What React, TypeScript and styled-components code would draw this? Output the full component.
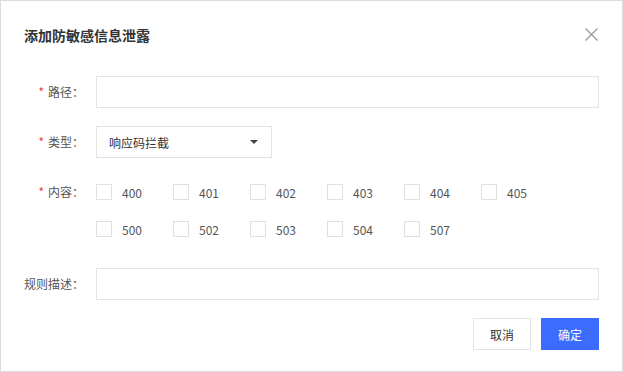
import React from "react";
import styled, { createGlobalStyle } from "styled-components";

const GlobalStyle = createGlobalStyle`
  html, body {
    margin: 0;
    padding: 0;
    background: #ffffff;
  }
  * {
    box-sizing: border-box;
  }
  body {
    font-family: "Noto Sans CJK SC", "Noto Sans", sans-serif;
    font-size: 12px;
    color: #333;
  }
`;

const Dialog = styled.div`
  width: 623px;
  height: 372px;
  border: 1px solid #dcdcdc;
  padding: 0 23px;
  background: #fff;
  display: flex;
  flex-direction: column;
`;

const Header = styled.div`
  display: flex;
  align-items: center;
  justify-content: space-between;
  padding-top: 23px;
  height: 44px;
`;

const Title = styled.h2`
  margin: 0;
  font-size: 14px;
  font-weight: 700;
  line-height: 20px;
  color: #333;
`;

const Close = styled.button`
  border: 0;
  background: none;
  padding: 0;
  width: 13px;
  height: 13px;
  display: flex;
  cursor: pointer;
  margin-right: 1px;
`;

const Form = styled.div`
  margin-top: 31px;
  display: flex;
  flex-direction: column;
  gap: 18px;
`;

const Row = styled.div<{ $top?: boolean }>`
  display: flex;
  align-items: ${(p) => (p.$top ? "flex-start" : "center")};
`;

const Label = styled.label`
  width: 72px;
  flex: none;
  padding-right: 12px;
  text-align: right;
  line-height: 32px;
  color: #555;
  white-space: nowrap;
`;

const Star = styled.span`
  color: #f04134;
  margin-right: 4px;
`;

const Input = styled.input`
  flex: 1;
  height: 32px;
  border: 1px solid #e3e3e3;
  outline: none;
  padding: 0 12px;
  font: inherit;
`;

const Select = styled.div`
  width: 176px;
  height: 32px;
  border: 1px solid #e3e3e3;
  display: flex;
  align-items: center;
  justify-content: space-between;
  padding: 0 12px 0 12px;
  color: #333;
`;

const Arrow = styled.span`
  width: 0;
  height: 0;
  border-left: 4px solid transparent;
  border-right: 4px solid transparent;
  border-top: 4px solid #444;
  margin-right: 1px;
`;

const Checks = styled.div`
  display: grid;
  grid-template-columns: repeat(6, 77px);
  row-gap: 5px;
  padding-bottom: 5px;
`;

const Check = styled.label`
  display: flex;
  align-items: center;
  gap: 10px;
  height: 32px;
  color: #555;
`;

const Box = styled.span`
  width: 16px;
  height: 16px;
  border: 1px solid #e0e0e0;
  background: #fff;
`;

const Footer = styled.div`
  display: flex;
  justify-content: flex-end;
  gap: 10px;
  margin-top: 18px;
`;

const Button = styled.button<{ $primary?: boolean }>`
  width: 58px;
  height: 32px;
  font: inherit;
  font-size: 12px;
  cursor: pointer;
  border: 1px solid ${(p) => (p.$primary ? "#3b6cfd" : "#e3e3e3")};
  background: ${(p) => (p.$primary ? "#3b6cfd" : "#fff")};
  color: ${(p) => (p.$primary ? "#fff" : "#333")};
`;

const codes = ["400", "401", "402", "403", "404", "405", "500", "502", "503", "504", "507"];

export default function App() {
  return (
    <>
      <GlobalStyle />
      <Dialog>
        <Header>
          <Title>添加防敏感信息泄露</Title>
          <Close aria-label="close">
            <svg width="13" height="13" viewBox="0 0 13 13">
              <path d="M0.5 0.5 L12.5 12.5 M12.5 0.5 L0.5 12.5" stroke="#999" strokeWidth="1.3" fill="none" />
            </svg>
          </Close>
        </Header>
        <Form>
          <Row>
            <Label>
              <Star>*</Star>路径：
            </Label>
            <Input />
          </Row>
          <Row>
            <Label>
              <Star>*</Star>类型：
            </Label>
            <Select>
              <span>响应码拦截</span>
              <Arrow />
            </Select>
          </Row>
          <Row $top>
            <Label>
              <Star>*</Star>内容：
            </Label>
            <Checks>
              {codes.map((c) => (
                <Check key={c}>
                  <Box />
                  {c}
                </Check>
              ))}
            </Checks>
          </Row>
          <Row>
            <Label>规则描述：</Label>
            <Input />
          </Row>
        </Form>
        <Footer>
          <Button>取消</Button>
          <Button $primary>确定</Button>
        </Footer>
      </Dialog>
    </>
  );
}
